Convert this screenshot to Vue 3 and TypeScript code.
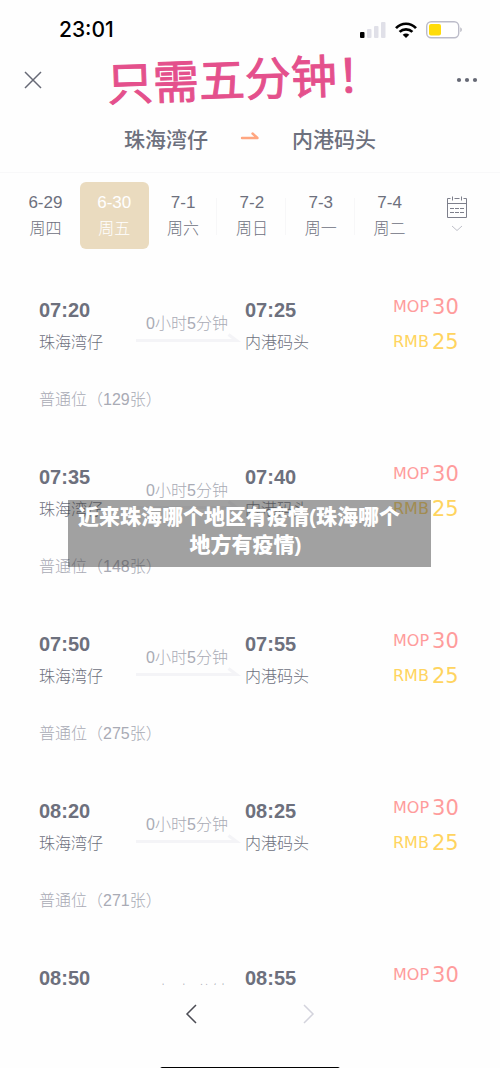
<script setup lang="ts">
interface Day { date: string; week: string; divided?: boolean }
interface Sailing { depart: string; arrive: string; seats: number }

const from = '珠海湾仔'
const to = '内港码头'

const days: Day[] = [
  { date: '6-29', week: '周四' },
  { date: '6-30', week: '周五' },
  { date: '7-1', week: '周六', divided: true },
  { date: '7-2', week: '周日', divided: true },
  { date: '7-3', week: '周一', divided: true },
  { date: '7-4', week: '周二' },
]
const selected = '6-30'

const sailings: Sailing[] = [
  { depart: '07:20', arrive: '07:25', seats: 129 },
  { depart: '07:35', arrive: '07:40', seats: 148 },
  { depart: '07:50', arrive: '07:55', seats: 275 },
  { depart: '08:20', arrive: '08:25', seats: 271 },
  { depart: '08:50', arrive: '08:55', seats: 280 },
]
</script>

<template>
  <div class="page">
    <div class="status">
      <span class="clock">23:01</span>
      <div class="indicators">
        <svg width="26" height="17" viewBox="0 0 26 17" aria-hidden="true">
          <rect x="0" y="10" width="4.500" height="6" rx="1" fill="#000" />
          <rect x="7" y="7" width="4.500" height="9" rx="1" fill="#e0e0e8" />
          <rect x="14" y="4" width="4.500" height="12" rx="1" fill="#e0e0e8" />
          <rect x="21" y="0" width="4.500" height="16" rx="1" fill="#e0e0e8" />
        </svg>
        <svg width="22" height="17" viewBox="0 0 22 17" aria-hidden="true">
          <g fill="none" stroke="#000" stroke-width="2.7">
            <path d="M1 6.1C6.6.3 15.4.3 21 6.1" />
            <path d="M4.6 9.9c3.6-3.5 9.200-3.500 12.800 0" />
          </g>
          <path d="M11 16l-3.300-3.200c1.800-1.700 4.800-1.700 6.600 0z" fill="#000" />
        </svg>
        <svg width="36" height="18" viewBox="0 0 36 18" aria-hidden="true">
          <rect x="0.700" y="0.700" width="32" height="16" rx="4.500" fill="#fff" stroke="#bcbcc9" stroke-width="1.400" />
          <rect x="3" y="3" width="12" height="11.500" rx="2" fill="#ffdc0a" />
          <path d="M34.300 6.300c2 .8 2 4 0 4.800z" fill="#b5b5bf" />
        </svg>
      </div>
    </div>

    <header class="header">
      <button class="icon-button" type="button" aria-label="关闭">
        <svg width="18" height="18" viewBox="0 0 18 18"><path d="M1 1l16 16M17 1L1 17" fill="none" stroke="#666975" stroke-width="1.500" /></svg>
      </button>
      <h1 class="slogan">只需五分钟！</h1>
      <button class="icon-button" type="button" aria-label="更多">
        <svg width="22" height="6" viewBox="0 0 22 6" fill="#666975"><circle cx="3" cy="3" r="2.100" /><circle cx="11" cy="3" r="2.100" /><circle cx="19" cy="3" r="2.100" /></svg>
      </button>
    </header>

    <div class="route">
      <span>{{ from }}</span>
      <svg width="20" height="16" viewBox="0 0 20 16" aria-hidden="true"><path d="M2 6h15.500L12.500 1.500" fill="none" stroke="#ffa680" stroke-width="2.400" stroke-linecap="round" stroke-linejoin="round" /></svg>
      <span>{{ to }}</span>
    </div>

    <nav class="calendar">
      <button
        v-for="day in days"
        :key="day.date"
        type="button"
        class="day"
        :class="{ active: day.date === selected, divided: day.divided }"
      >
        <span class="date">{{ day.date }}</span>
        <span>{{ day.week }}</span>
      </button>
      <button class="picker" type="button" aria-label="选择日期">
        <svg width="22" height="36" viewBox="0 0 22 36" fill="none" stroke="#7d7f8b">
          <path d="M4.500 2.500h-3v19h19v-19h-3M1.500 7.500h19M6.500 .5v4M8.500 2.500h5M15.500 .5v4" />
          <path d="M4 12.500h14M4 16.500h14" stroke-dasharray="4 1" />
          <path d="M6 30l5 4.500 5-4.500" stroke="#bfc0c9" />
        </svg>
      </button>
    </nav>

    <main class="list">
      <article v-for="s in sailings" :key="s.depart" class="sailing">
        <div class="stop">
          <strong>{{ s.depart }}</strong>
          <span>{{ from }}</span>
        </div>
        <div class="duration">
          <span>0小时5分钟</span>
          <svg width="102" height="8" viewBox="0 0 102 8" aria-hidden="true"><path d="M0 4.500h100.500l-8-6" fill="none" stroke="#f4f4f7" stroke-width="3" /></svg>
        </div>
        <div class="stop">
          <strong>{{ s.arrive }}</strong>
          <span>{{ to }}</span>
        </div>
        <div class="prices">
          <div class="price mop">MOP<b>30</b></div>
          <div class="price rmb">RMB<b>25</b></div>
        </div>
        <div class="seats">普通位（{{ s.seats }}张）</div>
      </article>
    </main>

    <footer class="toolbar">
      <button class="icon-button" type="button" aria-label="后退">
        <svg width="12" height="20" viewBox="0 0 12 20"><path d="M11 1L2 10l9 9" fill="none" stroke="#4b4c54" stroke-width="1.500" /></svg>
      </button>
      <button class="icon-button" type="button" aria-label="前进" disabled>
        <svg width="12" height="20" viewBox="0 0 12 20"><path d="M1 1l9 9-9 9" fill="none" stroke="#d3d3dc" stroke-width="1.500" /></svg>
      </button>
      <div class="home-bar"></div>
    </footer>

    <div class="caption">
      <span>近来珠海哪个地区有疫情(珠海哪个</span>
      <span class="second">地方有疫情)</span>
    </div>
  </div>
</template>

<style>
body { margin: 0; background: #fefefe; }
</style>

<style scoped>
.page {
  position: relative;
  display: flex;
  flex-direction: column;
  height: 100vh;
  overflow: hidden;
  color: #6d707d;
  background: #fefefe;
  font-family: "Liberation Sans", "Noto Sans CJK SC", sans-serif;
  font-size: 16px;
  line-height: 24px;
}
button {
  margin: 0;
  padding: 0;
  border: 0;
  background: none;
  color: inherit;
  font: inherit;
}
svg { display: block; overflow: visible; }
.status {
  display: flex;
  align-items: center;
  justify-content: space-between;
  height: 52px;
  padding: 4px 38px 0 59px;
}
.clock {
  color: #000;
  font-family: Inter, sans-serif;
  font-size: 21px;
  font-weight: 500;
}
.indicators { display: flex; align-items: center; gap: 9px; }
.header {
  display: flex;
  align-items: center;
  justify-content: space-between;
  height: 48px;
  padding: 0 21px;
}
.icon-button {
  display: flex;
  align-items: center;
  justify-content: center;
  width: 24px;
  height: 24px;
}
.slogan {
  margin: 0;
  padding: 0 10px 8px 0;
  color: #e4508c;
  font-family: "Noto Sans CJK SC", sans-serif;
  font-size: 46px;
  font-weight: 400;
  line-height: 52px;
  white-space: nowrap;
  transform: rotate(-2deg);
  -webkit-text-stroke: 1px #e4508c;
}
.route {
  display: flex;
  align-items: center;
  justify-content: center;
  gap: 32px;
  height: 69px;
  padding-top: 3px;
  box-sizing: border-box;
  border-bottom: 1px solid #f8f8f9;
  font-size: 21px;
  font-weight: 500;
}
.calendar {
  display: flex;
  flex: none;
  padding: 9px 32px 0 11px;
}
.day {
  position: relative;
  display: flex;
  flex: 1;
  flex-direction: column;
  align-items: center;
  justify-content: center;
  gap: 2px;
  height: 67px;
  border-radius: 6px;
  font-weight: 300;
}
.date { font-size: 17px; }
.active { background: #eadbbf; color: #fff; }
.divided::after {
  content: "";
  position: absolute;
  top: 16px;
  right: 0;
  bottom: 14px;
  width: 1px;
  background: #f7f7f8;
}
.picker { margin-left: 22px; padding-bottom: 4px; }
.list {
  flex: 1;
  min-height: 0;
  padding-top: 49px;
  overflow: hidden;
}
.sailing {
  display: grid;
  grid-template-columns: 97px 109px 1fr 68px;
  align-content: start;
  height: 167px;
  padding: 0 39px;
}
.stop { display: flex; flex-direction: column; gap: 9px; font-weight: 300; }
.stop strong { font-size: 20px; font-weight: 700; }
.duration {
  width: 102px;
  padding-top: 14px;
  color: #a9abb5;
  font-weight: 300;
  text-align: center;
}
.prices {
  display: flex;
  flex-direction: column;
  gap: 17px;
  font-family: "DejaVu Sans", sans-serif;
}
.price { display: flex; align-items: center; gap: 3px; line-height: 18px; }
.price b { font-size: 21px; font-weight: 400; }
.mop { color: #ff9c9c; }
.rmb { color: #ffd45f; }
.seats {
  grid-column: 1 / -1;
  margin-top: 33px;
  color: #a9abb5;
  font-weight: 300;
}
.toolbar {
  position: relative;
  display: flex;
  flex: none;
  justify-content: center;
  gap: 94px;
  height: 66px;
  padding-top: 17px;
}
.home-bar {
  position: absolute;
  top: 82px;
  left: 32%;
  right: 32%;
  height: 5px;
  border-radius: 3px;
  background: #000;
}
.caption {
  position: absolute;
  top: 500px;
  left: 68px;
  right: 69px;
  display: flex;
  flex-direction: column;
  padding: 3px 18px 8px 10px;
  background: rgba(68, 68, 68, 0.5);
  color: #fff;
  font-size: 21px;
  font-weight: 900;
  line-height: 28px;
  white-space: nowrap;
}
.second { text-align: center; }
</style>
